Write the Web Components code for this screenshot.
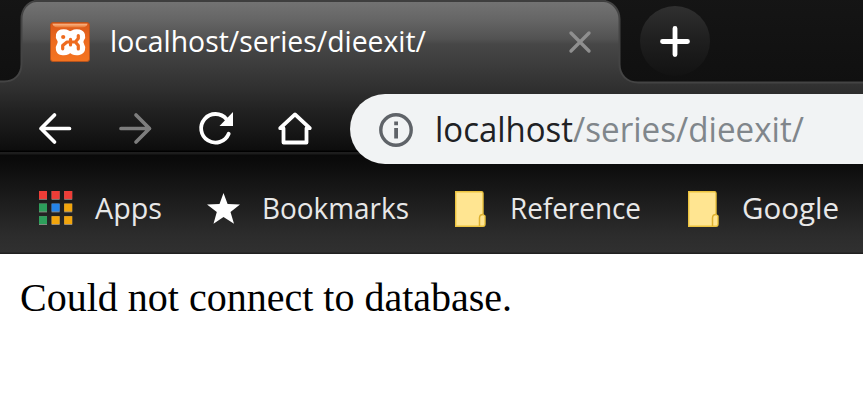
<!DOCTYPE html>
<html lang="en">
<head>
<meta charset="utf-8">
<title>localhost/series/dieexit/</title>
<style>
html,body{margin:0;padding:0;width:863px;height:402px;overflow:hidden;background:#fff}
</style>
</head>
<body>
<browser-window></browser-window>
<script>
const define = (name, html, Base = HTMLElement) => {
  const t = document.createElement('template');
  t.innerHTML = html;
  customElements.define(name, class extends Base {
    constructor() { super(); this.attachShadow({mode: 'open'}).append(t.content.cloneNode(true)); }
  });
};

/* A single line of text set to an exact advance width. */
customElements.define('fit-text', class extends HTMLElement {
  connectedCallback() {
    const w = this.getAttribute('width'), s = this.getAttribute('size');
    const root = this.shadowRoot || this.attachShadow({mode: 'open'});
    root.innerHTML = `<style>:host{display:block;flex:none;width:${w}px;height:40px}svg{display:block;overflow:visible}
      text{font-family:"Open Sans","Noto Sans",sans-serif;font-size:${s}px;fill:currentColor}</style>
      <svg width="${w}" height="40"><text x="0" y="30" textLength="${w}" lengthAdjust="spacingAndGlyphs"></text></svg>`;
    root.querySelector('text').textContent = this.getAttribute('label');
  }
});

const icons = {
  xampp: `<defs><linearGradient id="o" x2="0" y2="1"><stop stop-color="#d9581a"/><stop offset=".5" stop-color="#ee6b1f"/><stop offset="1" stop-color="#f47420"/></linearGradient>
    <linearGradient id="h" x2="0" y2="1"><stop stop-color="#f9b98c"/><stop offset="1" stop-color="#e9732c"/></linearGradient></defs>
    <rect x=".5" y=".5" width="39" height="39" rx="2.500" fill="url(#o)" stroke="#b5531d"/>
    <path d="M2.500 1.800H37.500C37 4.500 35 5.500 32 5.500H8C5 5.500 3 4.500 2.500 1.800Z" fill="url(#h)"/>
    <path d="M20.300 12.800C18 9.500 14 9 11.500 9.800C8 11 7 14.500 9.300 17.500Q10.800 19.800 9.300 22.500C7 26 8 30 11.500 30.800C15 31.500 18 31 20.300 27.500C22.500 31 25.500 31.500 29 30.800C33 30 34 26 31.800 22.500Q30.300 19.800 31.800 17.500C34 14.500 33 11 29 9.800C26.500 9 22.500 9.500 20.300 12.800Z" fill="#fff" stroke="#fff" stroke-width="4.600" stroke-linejoin="round"/>
    <path d="M28.300 13.500V16.500L25.300 20L28.300 23.500V27M26 20H17L12.700 23.500V26.800M20.500 17.300V23" fill="none" stroke="#ee6b1f" stroke-width="3.200" stroke-linejoin="round" stroke-linecap="round"/>
    <circle cx="13.200" cy="15" r="2.100" fill="#ee6b1f"/>`,
  close: `<path d="M2 2L20 20M20 2L2 20" stroke="#8f8f8f" stroke-width="3.400" stroke-linecap="round"/>`,
  plus: `<defs><linearGradient id="p" x2="0" y2="1"><stop stop-color="#303030"/><stop offset=".45" stop-color="#202020"/><stop offset="1" stop-color="#121212"/></linearGradient></defs>
    <circle cx="35" cy="35" r="35" fill="url(#p)"/><path d="M35 22.500V48.500M22.500 35.500H47.500" stroke="#fff" stroke-width="4.800" stroke-linecap="round"/>`,
  back: `<path d="M32.500 17.500H4M17.500 4L4 17.500L17.500 31" fill="none" stroke="#fff" stroke-width="3.700" stroke-linecap="round" stroke-linejoin="round"/>`,
  forward: `<path d="M2 17.500H30.500M17 4L30.500 17.500L17 31" fill="none" stroke="#7d7d7d" stroke-width="3.700" stroke-linecap="round" stroke-linejoin="round"/>`,
  reload: `<path d="M29.700 22.700A14.300 14.300 0 1 1 27.500 8.200" fill="none" stroke="#fff" stroke-width="3.800" stroke-linecap="round"/><path d="M34 1V15H20.500Z" fill="#fff"/>`,
  home: `<path d="M2.200 17.200L17 3.400L31.800 17.200H28.500V31.500H5.500V17.200Z" fill="none" stroke="#fff" stroke-width="3.800" stroke-linejoin="round"/>`,
  info: `<circle cx="17" cy="17" r="15.200" fill="none" stroke="#5f6368" stroke-width="3.400"/><path d="M15.200 8.500h3.800v3.700h-3.800zM15.200 15h3.800v10.500h-3.800z" fill="#5f6368"/>`,
  apps: [0,1,2].map(r => [0,1,2].map(c => {
      const col = r === 0 ? '#ee3d37' : c === 0 ? '#2d9f5b' : (r === 1 && c === 1) ? '#2584e8' : '#f2a50c';
      const x = c * 12.6, y = r * 12.6;
      return `<rect x="${x}" y="${y}" width="8" height="8.800" fill="#8e8a86"/><rect x="${x}" y="${y}" width="8" height="7.900" fill="${col}"/>`;
    }).join('')).join(''),
  star: `<path d="M16.500 0L20.600 11L33 11.500L23.500 19L27 30.800L16.500 24L6.500 30.800L9.800 19L0 11.500L12.500 11Z" fill="#fff"/>`,
  folder: `<path d="M.7.700H26.500Q28 .7 28 2.200V23.500L30 25V33Q30 35.200 28 35.200H.7Z" fill="#ffe591" stroke="#ecc33f" stroke-width="1.400"/><path d="M28 23.500Q24.500 23.500 24.500 27V35" fill="none" stroke="#ddb02f" stroke-width="1.500"/>`
};
customElements.define('ui-icon', class extends HTMLElement {
  connectedCallback() {
    const w = this.getAttribute('w'), h = this.getAttribute('h');
    const root = this.shadowRoot || this.attachShadow({mode: 'open'});
    root.innerHTML = `<style>:host{display:block;flex:none;width:${w}px;height:${h}px}svg{display:block;overflow:visible}</style>
      <svg width="${w}" height="${h}" viewBox="0 0 ${w} ${h}">${icons[this.getAttribute('name')]}</svg>`;
  }
});

define('tab-strip', `<style>
  :host{display:block;position:relative;height:84px}
  .shape{position:absolute;left:0;top:0}
  .row{position:relative;display:flex;align-items:flex-start;padding-left:50px}
  .fav{margin-top:22px}.title{margin:22px 0 0 20px;color:#fff}.close{margin:31px 0 0 143px}.new{margin:6px 0 0 49px}
  </style>
  <svg class="shape" width="863" height="84">
    <defs><linearGradient id="d" x2="0" y2="1"><stop stop-color="#151515"/><stop offset="1" stop-color="#101010"/></linearGradient></defs>
    <path d="M-4 -4H36V1C27 2 21.500 10 21.500 19V64C21.500 75 14 81.500 4 81.500H-4Z" fill="url(#d)" stroke="#444" stroke-width="2"/>
    <path d="M867 -4H604V1C613 2 619.500 10 619.500 19V64C619.500 75 627 82.500 638 82.500H867Z" fill="url(#d)" stroke="#444" stroke-width="2"/>
    <path d="M34 1H606" stroke="#3e3e3e" stroke-width="2"/>
  </svg>
  <div class="row">
    <ui-icon class="fav" name="xampp" w="40" h="40"></ui-icon>
    <fit-text class="title" label="localhost/series/dieexit/" size="30" width="316"></fit-text>
    <ui-icon class="close" name="close" w="22" h="22"></ui-icon>
    <ui-icon class="new" name="plus" w="70" h="70"></ui-icon>
  </div>`);

define('address-bar', `<style>
  :host{display:flex;align-items:flex-start;box-sizing:border-box;width:560px;height:70px;border-radius:35px;background:#f1f3f4;padding-left:29px}
  .i{margin-top:19px}.host{margin:18px 0 0 22px;color:#202124}.path{margin-top:18px;color:#80868b}
  </style>
  <ui-icon class="i" name="info" w="34" h="34"></ui-icon>
  <fit-text class="host" label="localhost" size="34" width="138"></fit-text>
  <fit-text class="path" label="/series/dieexit/" size="34" width="231"></fit-text>`);

define('nav-bar', `<style>
  :host{display:flex;align-items:flex-start;height:70px;padding:10px 0 0 37px}
  ui-icon{margin-top:17px}.f{margin-left:47px}.r{margin-left:47px}.h{margin-left:45px}
  address-bar{margin-left:38px;flex:none}
  </style>
  <ui-icon name="back" w="35" h="35"></ui-icon>
  <ui-icon class="f" name="forward" w="33" h="35"></ui-icon>
  <ui-icon class="r" name="reload" w="34" h="35"></ui-icon>
  <ui-icon class="h" name="home" w="34" h="35"></ui-icon>
  <address-bar></address-bar>`);

define('bookmark-item', `<style>
  :host{display:flex;align-items:flex-start;flex:none;color:#e8e8e8}
  </style><slot name="icon"></slot><slot></slot>`);

define('bookmarks-bar', `<style>
  :host{display:flex;align-items:flex-start;height:65px;padding:25px 0 0 39px}
  </style>
  <bookmark-item><ui-icon slot="icon" name="apps" w="33" h="34" style="margin:2px 23px 0 0"></ui-icon><fit-text label="Apps" size="29" width="67"></fit-text></bookmark-item>
  <bookmark-item style="margin-left:45px"><ui-icon slot="icon" name="star" w="34" h="34" style="margin:4px 21px 0 0"></ui-icon><fit-text label="Bookmarks" size="29" width="147"></fit-text></bookmark-item>
  <bookmark-item style="margin-left:46px"><ui-icon slot="icon" name="folder" w="31" h="36" style="margin:2px 24px 0 0"></ui-icon><fit-text label="Reference" size="29" width="131"></fit-text></bookmark-item>
  <bookmark-item style="margin-left:47px"><ui-icon slot="icon" name="folder" w="31" h="36" style="margin:2px 23px 0 0"></ui-icon><fit-text label="Google" size="29" width="97"></fit-text></bookmark-item>`);

define('browser-window', `<style>
  :host{display:block;width:863px;height:402px;overflow:hidden;background:#fff}
  header{height:254px;overflow:hidden;background:linear-gradient(#747474 0,#656565 20px,#525252 39px,#474747 44px,#3c3c3c 65px,#303030 88px,#222 110px,#0d0d0d 150px,#000 151px,#000 152px,#1e1e1e 152px,#1b1b1b 154px,#090909 155px,#0b0b0b 162px,#1c1c1c 200px,#2c2c2c 235px,#303030 252px,#202020 253px,#202020 254px)}
  main{padding:21px 20px;font:40px/46px "Liberation Serif",serif;color:#000;white-space:nowrap}
  </style>
  <header><tab-strip></tab-strip><nav-bar></nav-bar><bookmarks-bar></bookmarks-bar></header>
  <main>Could not connect to database.</main>`);
</script>
</body>
</html>
